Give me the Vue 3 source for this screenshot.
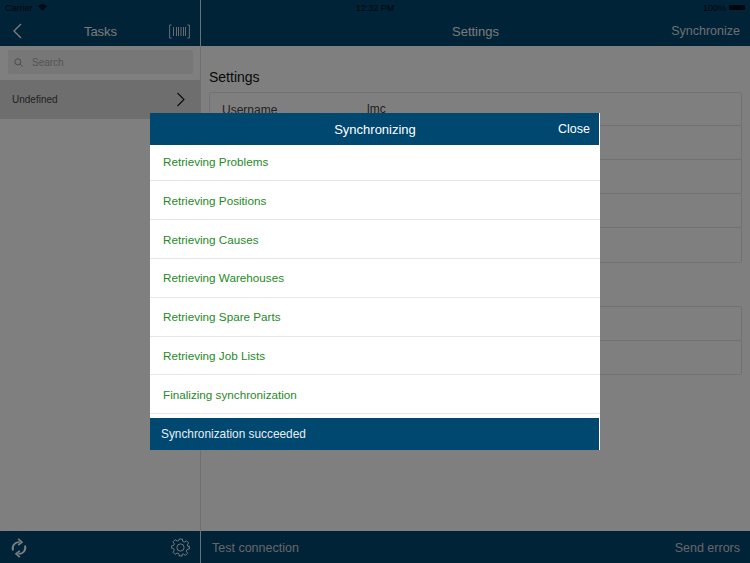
<template>
  <div class="screen">
    <div class="status">
      <div class="status-left">
        <span>Carrier</span>
        <svg width="9" height="7" viewBox="0 0 11 8"><path d="M5.5 8 0 2.4C3.2-.8 7.8-.8 11 2.4Z" fill="#000" opacity=".8" /></svg>
      </div>
      <span class="status-time">12:32 PM</span>
      <div class="status-right">
        <span>100%</span>
        <span class="battery"></span>
      </div>
    </div>

    <div class="columns">
      <aside class="side">
        <div class="nav side-nav">
          <svg class="back" width="12" height="16" viewBox="0 0 12 16"><path d="M10 1 3 8l7 7" fill="none" stroke="#fff" stroke-width="1.3" /></svg>
          <span class="nav-title">Tasks</span>
          <svg class="barcode" width="21" height="15" viewBox="0 0 21 15" fill="none" stroke="#fff" stroke-width=".8">
            <path d="M2.5 1H.6v13h1.9M18.5 1h1.9v13h-1.9" />
            <path d="M4.5 3v9M7.5 3v9M9.5 3v9M12 3v9M14.5 3v9M16.5 3v9" />
          </svg>
        </div>
        <div class="search-wrap">
          <div class="search">
            <svg width="9" height="9" viewBox="0 0 9 9" fill="none" stroke="#999" stroke-width="1"><circle cx="3.8" cy="3.8" r="3" /><path d="m6 6 2.6 2.6" /></svg>
            <span>Search</span>
          </div>
        </div>
        <div class="task">
          <span>Undefined</span>
          <svg width="10" height="15" viewBox="0 0 10 15"><path d="m1.5 1 6.5 6.5L1.5 14" fill="none" stroke="#111" stroke-width="1.1" /></svg>
        </div>
        <div class="grow"></div>
        <div class="foot side-foot">
          <svg width="18" height="20" viewBox="0 0 18 20" fill="none" stroke="#fff" stroke-width="1.9">
            <path d="M3 12.5C1.6 8 4.8 3.8 9.6 4.2" />
            <path d="M8.2 0.8 12 4.2 8.2 7.2" stroke-width="1.6" />
            <path d="M15 7.5c1.4 4.5-1.8 8.7-6.6 8.3" />
            <path d="M9.8 19.2 6 15.8l3.8-3" stroke-width="1.6" />
          </svg>
          <svg width="19" height="19" viewBox="0 0 19 19" fill="none" stroke="#fff" stroke-width=".9">
            <circle cx="9.5" cy="9.5" r="3.6" />
            <path d="M8 1h3l.5 2.4 1.6.7 2.1-1.3 2.1 2.1-1.3 2.1.7 1.6L18 8v3l-2.3.5-.7 1.6 1.3 2.1-2.1 2.1-2.1-1.3-1.6.7L10.9 18H8l-.5-2.3-1.6-.7-2.1 1.3-2.1-2.1L3 12.1l-.7-1.6L0 10V8l2.3-.5.7-1.6-1.3-2.1 2.1-2.1 2.1 1.3 1.6-.7Z" transform="translate(.3 0)" />
          </svg>
        </div>
      </aside>

      <main class="main">
        <div class="nav main-nav">
          <span></span>
          <span class="nav-title">Settings</span>
          <span class="nav-action">Synchronize</span>
        </div>
        <div class="content">
          <h2>Settings</h2>
          <div class="table first">
            <div class="cell"><span class="label">Username</span><span class="value">lmc</span></div>
            <div class="cell"></div>
            <div class="cell"></div>
            <div class="cell"></div>
            <div class="cell"></div>
          </div>
          <div class="table second">
            <div class="cell"></div>
            <div class="cell"></div>
          </div>
        </div>
        <div class="foot main-foot">
          <span>Test connection</span>
          <span>Send errors</span>
        </div>
      </main>
    </div>

    <div class="overlay">
      <div class="modal">
        <div class="modal-head">
          <span></span>
          <span class="modal-title">Synchronizing</span>
          <span class="modal-close">Close</span>
        </div>
        <div class="steps-clip">
          <ul class="steps">
            <li v-for="step in steps" :key="step">{{ step }}</li>
          </ul>
        </div>
        <div class="modal-foot">Synchronization succeeded</div>
      </div>
    </div>
  </div>
</template>

<script setup>
const steps = [
  'Retrieving Problems',
  'Retrieving Positions',
  'Retrieving Causes',
  'Retrieving Warehouses',
  'Retrieving Spare Parts',
  'Retrieving Job Lists',
  'Finalizing synchronization'
]
</script>

<style>
html, body { margin: 0; padding: 0; }
</style>

<style scoped>
.screen {
  position: relative;
  width: 750px;
  height: 563px;
  overflow: hidden;
  background: #fff;
  font-family: "Liberation Sans", Arial, sans-serif;
  color: #333;
}
.status {
  position: absolute;
  z-index: 2;
  top: 0;
  left: 0;
  right: 0;
  height: 15px;
  padding: 0 5px;
  display: grid;
  grid-template-columns: 1fr auto 1fr;
  align-items: center;
  font-size: 9px;
  color: #000;
}
.status-left { display: flex; align-items: center; gap: 5px; opacity: .8; }
.status-time { opacity: .8; }
.status-right { display: flex; align-items: center; justify-content: flex-end; gap: 3px; opacity: .8; }
.battery { width: 16px; height: 5px; border-radius: 1px; background: #000; }
.columns { display: flex; height: 100%; }
.side {
  width: 200px;
  flex: none;
  display: flex;
  flex-direction: column;
  border-right: 1px solid #e0e0e0;
  box-sizing: content-box;
}
.main { flex: 1; display: flex; flex-direction: column; min-width: 0; }
.nav {
  height: 46px;
  flex: none;
  box-sizing: border-box;
  padding-top: 16px;
  background: #004670;
  display: grid;
  grid-template-columns: 1fr auto 1fr;
  align-items: center;
  color: #fff;
  font-size: 13px;
}
.side-nav { padding-left: 11px; padding-right: 10px; }
.main-nav { padding-right: 10px; padding-left: 10px; }
.barcode { justify-self: end; }
.nav-action { font-size: 12.5px; color: #ddd; text-align: right; }
.nav-title { color: #f2f2f2; }
.search-wrap { padding: 4px 7px 6px 8px; height: 34px; box-sizing: border-box; }
.search {
  height: 24px;
  background: #eeeeee;
  border-radius: 2px;
  display: flex;
  align-items: center;
  gap: 9px;
  padding-left: 6px;
  font-size: 10px;
  color: #aaa;
}
.task {
  height: 39px;
  background: #dcdcdc;
  padding: 0 14px 0 12px;
  display: flex;
  align-items: center;
  justify-content: space-between;
  font-size: 10px;
  color: #444;
}
.grow { flex: 1; }
.foot {
  height: 32px;
  flex: none;
  background: #004670;
  display: flex;
  align-items: center;
  justify-content: space-between;
  color: #ccc;
  font-size: 12.5px;
  padding-top: 1px;
  box-sizing: border-box;
}
.side-foot { padding-left: 10px; padding-right: 10px; }
.main-foot { padding-left: 11px; padding-right: 10px; }
.content { flex: 1; padding: 23px 8px 0 8px; }
.content h2 {
  margin: 0 0 7px;
  font-size: 14px;
  line-height: 16px;
  font-weight: 400;
  color: #111;
}
.table { border: 1px solid #e4e4e4; border-radius: 2px; }
.second { margin-top: 43px; }
.cell {
  height: 33px;
  border-bottom: 1px solid #e4e4e4;
  display: flex;
  align-items: center;
  font-size: 12px;
  color: #444;
}
.cell:last-child { border-bottom: 0; }
.first .cell:first-child { height: 32px; }
.first .cell:last-child { height: 34px; }
.label { width: 145px; margin-left: 12px; padding-top: 1px; }
.value { margin-bottom: 1px; }
.overlay {
  position: absolute;
  inset: 0;
  z-index: 1;
  background: rgba(0, 0, 0, .5);
  display: flex;
  align-items: flex-start;
  justify-content: center;
  padding-top: 113px;
}
.modal {
  width: 450px;
  height: 337px;
  background: #fff;
  display: flex;
  flex-direction: column;
  overflow: hidden;
}
.modal-head {
  height: 32px;
  flex: none;
  background: #004870;
  color: #fff;
  display: grid;
  grid-template-columns: 1fr auto 1fr;
  align-items: center;
  font-size: 13px;
  padding: 0 9px 0 10px;
  margin-right: 1px;
}
.modal-close { text-align: right; font-size: 12.5px; }
.steps-clip { flex: 1; overflow: hidden; }
.steps { list-style: none; margin: -2.5px 0 0; padding: 0; }
.steps li {
  height: 38.83px;
  box-sizing: border-box;
  border-bottom: 1px solid #e6e6e6;
  padding-left: 13px;
  display: flex;
  align-items: center;
  font-size: 11.7px;
  color: #1f8a1f;
}
.modal-foot {
  height: 32px;
  flex: none;
  box-sizing: border-box;
  background: #004870;
  color: #e6eef3;
  display: flex;
  align-items: center;
  padding: 0 0 1px 11px;
  margin-right: 1px;
  font-size: 11.85px;
}
</style>
